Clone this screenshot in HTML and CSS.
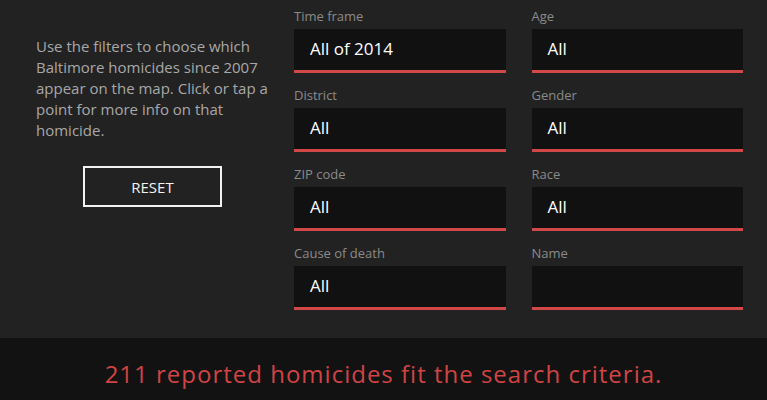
FILE: index.html
```html
<!DOCTYPE html>
<html lang="en">
<head>
    <meta charset="UTF-8">
    <meta name="viewport" content="width=device-width, initial-scale=1.0">
    <title>Baltimore homicides</title>
    <link rel="stylesheet" href="styles.css">
</head>
<body>
    <div class="filters">
        <div class="intro">
            <p>Use the filters to choose which Baltimore homicides since 2007 appear on the map. Click or tap a point for more info on that homicide.</p>
            <button class="reset-btn">RESET</button>
        </div>

        <div class="filter-grid">
            <div class="field">
                <label>Time frame</label>
                <div class="select">All of 2014</div>
            </div>
            <div class="field">
                <label>Age</label>
                <div class="select">All</div>
            </div>
            <div class="field">
                <label>District</label>
                <div class="select">All</div>
            </div>
            <div class="field">
                <label>Gender</label>
                <div class="select">All</div>
            </div>
            <div class="field">
                <label>ZIP code</label>
                <div class="select">All</div>
            </div>
            <div class="field">
                <label>Race</label>
                <div class="select">All</div>
            </div>
            <div class="field">
                <label>Cause of death</label>
                <div class="select">All</div>
            </div>
            <div class="field">
                <label>Name</label>
                <div class="select"></div>
            </div>
        </div>
    </div>

    <div class="results">
        211 reported homicides fit the search criteria.
    </div>
</body>
</html>
```

FILE: styles.css
```css
body {
    margin: 0;
    padding: 0;
    background-color: #222222;
    font-family: "Open Sans", Arial, sans-serif;
    overflow: hidden;
}

.filters {
    display: flex;
    height: 338px;
    box-sizing: border-box;
    padding: 8px 24px 0 36px;
}

.intro {
    width: 258px;
    display: flex;
    flex-direction: column;
}

.intro p {
    margin: 28px 0 0;
    width: 240px;
    color: #a8a8a8;
    font-size: 15px;
    line-height: 21px;
}

.reset-btn {
    margin: 25px 0 0 47px;
    width: 139px;
    height: 41px;
    background: transparent;
    border: 2px solid #f2f2f2;
    color: #f2f2f2;
    font-family: inherit;
    font-size: 15px;
    cursor: pointer;
}

.filter-grid {
    flex: 1;
    display: grid;
    grid-template-columns: 1fr 1fr;
    column-gap: 26px;
    row-gap: 14px;
    align-content: start;
}

.field label {
    display: block;
    height: 21px;
    color: #8a8a8a;
    font-size: 13px;
    line-height: 16px;
}

.select {
    height: 41px;
    box-sizing: content-box;
    background-color: #111111;
    border-bottom: 3px solid #d24747;
    padding-left: 16px;
    color: #ffffff;
    font-size: 17px;
    line-height: 40px;
}

.results {
    height: 62px;
    background-color: #121212;
    color: #d04444;
    font-size: 24px;
    letter-spacing: 1px;
    text-align: center;
    line-height: 72px;
}
```
